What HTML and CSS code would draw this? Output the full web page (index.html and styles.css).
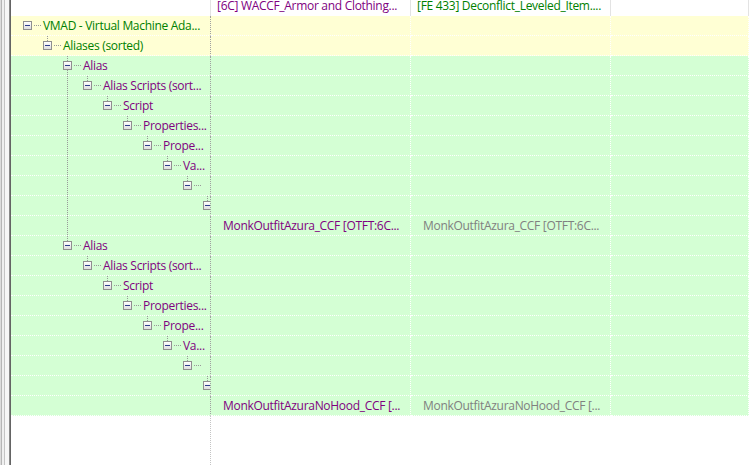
FILE: index.html
```html
<!DOCTYPE html>
<html lang="en">
<head>
    <meta charset="UTF-8">
    <title>VMAD compare view</title>
    <link rel="stylesheet" href="styles.css">
</head>
<body>

<div class="splitter"></div>

<div class="tree">
    <div class="row head">
        <div class="cell"></div>
        <div class="cell purple">[6C] WACCF_Armor and Clothing...</div>
        <div class="cell green">[FE 433] Deconflict_Leveled_Item....</div>
        <div class="cell"></div>
    </div>

    <!-- VMAD / Aliases -->
    <div class="row yellow">
        <div class="cell tree-cell"><span class="node"><i class="btn"></i></span><span class="label green">VMAD - Virtual Machine Ada...</span></div>
        <div class="cell"></div><div class="cell"></div><div class="cell"></div>
    </div>
    <div class="row yellow">
        <div class="cell tree-cell"><span class="ind"></span><span class="node up"><i class="btn"></i></span><span class="label green">Aliases (sorted)</span></div>
        <div class="cell"></div><div class="cell"></div><div class="cell"></div>
    </div>

    <!-- first alias -->
    <div class="row">
        <div class="cell tree-cell"><span class="ind"></span><span class="ind"></span><span class="node up down"><i class="btn"></i></span><span class="label">Alias</span></div>
        <div class="cell"></div><div class="cell"></div><div class="cell"></div>
    </div>
    <div class="row">
        <div class="cell tree-cell"><span class="ind"></span><span class="ind"></span><span class="ind guide"></span><span class="node up"><i class="btn"></i></span><span class="label">Alias Scripts (sort...</span></div>
        <div class="cell"></div><div class="cell"></div><div class="cell"></div>
    </div>
    <div class="row">
        <div class="cell tree-cell"><span class="ind"></span><span class="ind"></span><span class="ind guide"></span><span class="ind"></span><span class="node up"><i class="btn"></i></span><span class="label">Script</span></div>
        <div class="cell"></div><div class="cell"></div><div class="cell"></div>
    </div>
    <div class="row">
        <div class="cell tree-cell"><span class="ind"></span><span class="ind"></span><span class="ind guide"></span><span class="ind"></span><span class="ind"></span><span class="node up"><i class="btn"></i></span><span class="label">Properties...</span></div>
        <div class="cell"></div><div class="cell"></div><div class="cell"></div>
    </div>
    <div class="row">
        <div class="cell tree-cell"><span class="ind"></span><span class="ind"></span><span class="ind guide"></span><span class="ind"></span><span class="ind"></span><span class="ind"></span><span class="node up"><i class="btn"></i></span><span class="label">Prope...</span></div>
        <div class="cell"></div><div class="cell"></div><div class="cell"></div>
    </div>
    <div class="row">
        <div class="cell tree-cell"><span class="ind"></span><span class="ind"></span><span class="ind guide"></span><span class="ind"></span><span class="ind"></span><span class="ind"></span><span class="ind"></span><span class="node up"><i class="btn"></i></span><span class="label">Va...</span></div>
        <div class="cell"></div><div class="cell"></div><div class="cell"></div>
    </div>
    <div class="row">
        <div class="cell tree-cell"><span class="ind"></span><span class="ind"></span><span class="ind guide"></span><span class="ind"></span><span class="ind"></span><span class="ind"></span><span class="ind"></span><span class="ind"></span><span class="node up"><i class="btn"></i></span></div>
        <div class="cell"></div><div class="cell"></div><div class="cell"></div>
    </div>
    <div class="row">
        <div class="cell tree-cell"><span class="ind"></span><span class="ind"></span><span class="ind guide"></span><span class="ind"></span><span class="ind"></span><span class="ind"></span><span class="ind"></span><span class="ind"></span><span class="ind"></span><span class="node up"><i class="btn"></i></span></div>
        <div class="cell"></div><div class="cell"></div><div class="cell"></div>
    </div>
    <div class="row">
        <div class="cell tree-cell"><span class="ind"></span><span class="ind"></span><span class="ind guide"></span></div>
        <div class="cell value purple">MonkOutfitAzura_CCF [OTFT:6C...</div>
        <div class="cell value gray">MonkOutfitAzura_CCF [OTFT:6C...</div>
        <div class="cell"></div>
    </div>

    <!-- second alias -->
    <div class="row">
        <div class="cell tree-cell"><span class="ind"></span><span class="ind"></span><span class="node up"><i class="btn"></i></span><span class="label">Alias</span></div>
        <div class="cell"></div><div class="cell"></div><div class="cell"></div>
    </div>
    <div class="row">
        <div class="cell tree-cell"><span class="ind"></span><span class="ind"></span><span class="ind"></span><span class="node up"><i class="btn"></i></span><span class="label">Alias Scripts (sort...</span></div>
        <div class="cell"></div><div class="cell"></div><div class="cell"></div>
    </div>
    <div class="row">
        <div class="cell tree-cell"><span class="ind"></span><span class="ind"></span><span class="ind"></span><span class="ind"></span><span class="node up"><i class="btn"></i></span><span class="label">Script</span></div>
        <div class="cell"></div><div class="cell"></div><div class="cell"></div>
    </div>
    <div class="row">
        <div class="cell tree-cell"><span class="ind"></span><span class="ind"></span><span class="ind"></span><span class="ind"></span><span class="ind"></span><span class="node up"><i class="btn"></i></span><span class="label">Properties...</span></div>
        <div class="cell"></div><div class="cell"></div><div class="cell"></div>
    </div>
    <div class="row">
        <div class="cell tree-cell"><span class="ind"></span><span class="ind"></span><span class="ind"></span><span class="ind"></span><span class="ind"></span><span class="ind"></span><span class="node up"><i class="btn"></i></span><span class="label">Prope...</span></div>
        <div class="cell"></div><div class="cell"></div><div class="cell"></div>
    </div>
    <div class="row">
        <div class="cell tree-cell"><span class="ind"></span><span class="ind"></span><span class="ind"></span><span class="ind"></span><span class="ind"></span><span class="ind"></span><span class="ind"></span><span class="node up"><i class="btn"></i></span><span class="label">Va...</span></div>
        <div class="cell"></div><div class="cell"></div><div class="cell"></div>
    </div>
    <div class="row">
        <div class="cell tree-cell"><span class="ind"></span><span class="ind"></span><span class="ind"></span><span class="ind"></span><span class="ind"></span><span class="ind"></span><span class="ind"></span><span class="ind"></span><span class="node up"><i class="btn"></i></span></div>
        <div class="cell"></div><div class="cell"></div><div class="cell"></div>
    </div>
    <div class="row">
        <div class="cell tree-cell"><span class="ind"></span><span class="ind"></span><span class="ind"></span><span class="ind"></span><span class="ind"></span><span class="ind"></span><span class="ind"></span><span class="ind"></span><span class="ind"></span><span class="node up"><i class="btn"></i></span></div>
        <div class="cell"></div><div class="cell"></div><div class="cell"></div>
    </div>
    <div class="row">
        <div class="cell tree-cell"></div>
        <div class="cell value purple">MonkOutfitAzuraNoHood_CCF [...</div>
        <div class="cell value gray">MonkOutfitAzuraNoHood_CCF [...</div>
        <div class="cell"></div>
    </div>

    <div class="row fill">
        <div class="cell tree-cell"></div>
        <div class="cell"></div><div class="cell"></div><div class="cell"></div>
    </div>
</div>

</body>
</html>
```

FILE: styles.css
```css
html, body { margin: 0; height: 100%; }
body {
    display: flex;
    overflow: hidden;
    background: #fff;
    font-family: "Open Sans", "Noto Sans", sans-serif;
    font-size: 12px;
    letter-spacing: -0.3px;
    color: #800080;
}

/* splitter strip on the left */
.splitter {
    width: 11px;
    flex: none;
    background: linear-gradient(to right,
        #dcdcdc 0 1px, #b6b6b6 1px 2px, #f0f0f0 2px 4px, #c4c4c4 4px 5px,
        #f7f7f7 5px 9px, #8a8a8a 9px 10px, #646464 10px 11px);
}

.tree { flex: 1; display: flex; flex-direction: column; min-width: 0; }

.row {
    display: grid;
    grid-template-columns: 200px 200px 200px 1fr;
    height: 20px;
    background: #d4ffd4;
}
.row.yellow { background: #ffffd4; }

.cell {
    box-sizing: border-box;
    border-right: 1px dotted #fff;
    border-bottom: 1px dotted #fff;
    line-height: 19px;
    white-space: nowrap;
    overflow: hidden;
}
.cell.tree-cell { border-right-color: #a0a0a0; display: flex; padding-left: 12px; }
.cell.value { padding-left: 12px; }

.row.head { height: 16px; background: #fff; }
.row.head .cell {
    border-right: 1px solid #e3e3e3;
    border-bottom: 0;
    line-height: 12px;
    padding-left: 6px;
}

.row.fill { flex: 1; background: #fff; }
.row.fill .cell { border-bottom: 0; }
.row.fill .tree-cell { border-right-color: #c4c4c4; }

.green { color: #008000; }
.purple { color: #800080; }
.gray { color: #808080; }

/* tree indentation and lines */
.ind, .node { flex: none; width: 20px; height: 19px; position: relative; }
.ind.guide {
    background: repeating-linear-gradient(to bottom, #999 0 1px, transparent 1px 2px) no-repeat 4px 0 / 1px 100%;
}
.node {
    background: repeating-linear-gradient(to right, #999 0 1px, transparent 1px 2px) no-repeat 11px 9px / 8px 1px;
}
.node.up::before, .node.down::after {
    content: "";
    position: absolute;
    left: 4px;
    width: 1px;
    background: repeating-linear-gradient(to bottom, #999 0 1px, transparent 1px 2px);
}
.node.up::before { top: 0; height: 5px; }
.node.down::after { top: 14px; height: 6px; }

.btn {
    display: block;
    box-sizing: border-box;
    width: 9px;
    height: 9px;
    margin-top: 5px;
    border: 1px solid #8f8f8f;
    background: linear-gradient(to bottom, #fff, #dedede);
    position: relative;
}
.btn::after {
    content: "";
    position: absolute;
    left: 1px;
    top: 3px;
    width: 5px;
    height: 1px;
    background: #2d3c8c;
}
```
